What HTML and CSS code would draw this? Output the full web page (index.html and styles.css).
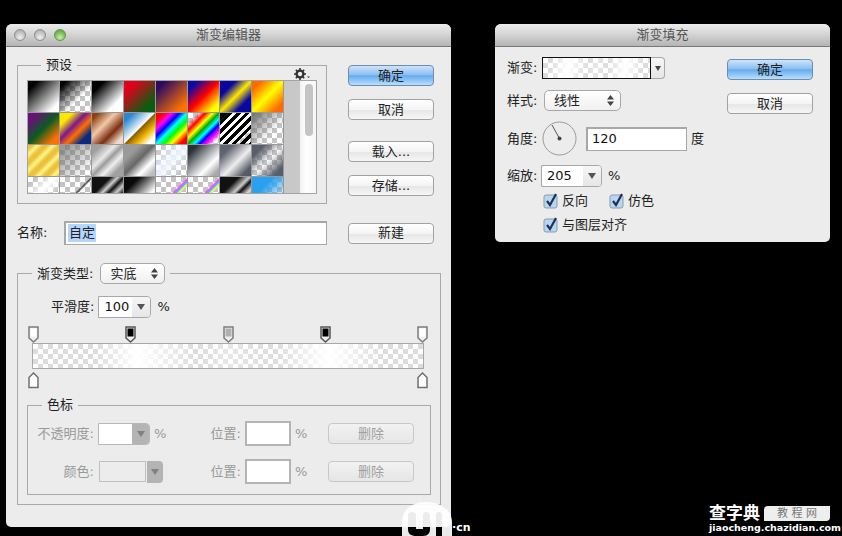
FILE: index.html
```html
<!DOCTYPE html>
<html lang="zh-CN">
<head>
    <meta charset="UTF-8">
    <meta name="viewport" content="width=device-width, initial-scale=1.0">
    <title>渐变编辑器</title>
    <link rel="stylesheet" href="styles.css">
</head>
<body>
    <!-- 渐变编辑器 -->
    <div class="window editor">
        <div class="titlebar">
            <div class="lights">
                <span class="light"></span>
                <span class="light"></span>
                <span class="light green"></span>
            </div>
            <span>渐变编辑器</span>
        </div>
        <div class="editor-body">
            <div class="editor-top">
                <fieldset class="group presets">
                    <legend>预设</legend>
                    <svg class="gear" width="16" height="12" viewBox="0 0 16 12">
                        <circle cx="6" cy="6" r="3.400" fill="none" stroke="#333" stroke-width="2.400"/>
                        <path d="M6 0v2.400M6 9.600V12M0 6h2.400M9.600 6H12M1.800 1.800l1.700 1.700M8.500 8.500l1.700 1.700M10.200 1.800L8.500 3.500M3.500 8.500l-1.700 1.700" stroke="#333" stroke-width="1.600"/>
                        <path d="M13 8.500h3l-1.500 1.500z" fill="#333"/>
                    </svg>
                    <div class="preset-box">
                        <div class="swatches">
                            <i class="sw a1"></i><i class="sw a2"></i><i class="sw a3"></i><i class="sw a4"></i><i class="sw a5"></i><i class="sw a6"></i><i class="sw a7"></i><i class="sw a8"></i>
                            <i class="sw b1"></i><i class="sw b2"></i><i class="sw b3"></i><i class="sw b4"></i><i class="sw b5"></i><i class="sw b6"></i><i class="sw b7"></i><i class="sw b8"></i>
                            <i class="sw c1"></i><i class="sw c2"></i><i class="sw c3"></i><i class="sw c4"></i><i class="sw c5"></i><i class="sw c6"></i><i class="sw c7"></i><i class="sw c8"></i>
                            <i class="sw d1"></i><i class="sw d2"></i><i class="sw d3"></i><i class="sw d4"></i><i class="sw d5"></i><i class="sw d5"></i><i class="sw d7"></i><i class="sw d8"></i>
                        </div>
                        <div class="preset-gutter"></div>
                        <div class="scrollbar"><div class="thumb"></div></div>
                    </div>
                </fieldset>
                <div class="side-buttons">
                    <div class="btn primary">确定</div>
                    <div class="btn">取消</div>
                    <div class="btn spaced">载入...</div>
                    <div class="btn">存储...</div>
                </div>
            </div>

            <div class="name-row">
                <span class="name-label">名称:</span>
                <div class="name-input"><span class="selected-text">自定</span></div>
                <div class="btn name-btn">新建</div>
            </div>

            <fieldset class="group gradient-group">
                <legend class="type-legend">
                    <span>渐变类型:</span>
                    <div class="select type-select">实底<svg class="updown" width="7" height="11" viewBox="0 0 7 11"><path d="M3.500 0L7 4.500H0zM3.500 11L0 6.500h7z" fill="#444"/></svg></div>
                </legend>
                <div class="smooth-row">
                    <span>平滑度:</span>
                    <div class="combo smooth-combo">
                        <div class="combo-value">100</div>
                        <div class="combo-arrow"><span class="tri"></span></div>
                    </div>
                    <span class="unit">%</span>
                </div>

                <div class="stops">
                    <svg class="stop" width="11" height="17"><path d="M1 1h9v11l-4.500 4-4.500-4z" fill="#eee" stroke="#7c7c7c" stroke-width="1.500"/><rect x="2.500" y="2.500" width="6" height="8" fill="#fff"/></svg>
                    <svg class="stop" width="11" height="17"><path d="M1 1h9v11l-4.500 4-4.500-4z" fill="#eee" stroke="#555" stroke-width="1.500"/><rect x="2.500" y="2.500" width="6" height="8" fill="#000"/></svg>
                    <svg class="stop" width="11" height="17"><path d="M1 1h9v11l-4.500 4-4.500-4z" fill="#eee" stroke="#7c7c7c" stroke-width="1.500"/><rect x="2.500" y="2.500" width="6" height="8" fill="#b0b0b0"/></svg>
                    <svg class="stop" width="11" height="17"><path d="M1 1h9v11l-4.500 4-4.500-4z" fill="#eee" stroke="#555" stroke-width="1.500"/><rect x="2.500" y="2.500" width="6" height="8" fill="#000"/></svg>
                    <svg class="stop" width="11" height="17"><path d="M1 1h9v11l-4.500 4-4.500-4z" fill="#eee" stroke="#7c7c7c" stroke-width="1.500"/><rect x="2.500" y="2.500" width="6" height="8" fill="#fff"/></svg>
                </div>
                <div class="gradient-bar"></div>
                <div class="stops bottom-stops">
                    <svg class="stop" width="11" height="17"><path d="M5.500 1l4.500 4.500V15.500H1V5.500z" fill="#fff" stroke="#707070" stroke-width="1.500"/></svg>
                    <svg class="stop" width="11" height="17"><path d="M5.500 1l4.500 4.500V15.500H1V5.500z" fill="#fff" stroke="#707070" stroke-width="1.500"/></svg>
                </div>

                <fieldset class="group color-group">
                    <legend>色标</legend>
                    <div class="color-rows">
                        <span class="dim-label">不透明度:</span>
                        <div class="cell-control">
                            <div class="combo opacity-combo">
                                <div class="combo-value"></div>
                                <div class="combo-arrow off"><span class="tri"></span></div>
                            </div>
                            <span class="unit dim">%</span>
                        </div>
                        <span class="dim-label">位置:</span>
                        <div class="pos-input"></div>
                        <span class="unit dim">%</span>
                        <div class="btn off">删除</div>

                        <span class="dim-label">颜色:</span>
                        <div class="cell-control">
                            <div class="color-swatch"></div>
                            <div class="color-arrow"><span class="tri"></span></div>
                        </div>
                        <span class="dim-label">位置:</span>
                        <div class="pos-input"></div>
                        <span class="unit dim">%</span>
                        <div class="btn off">删除</div>
                    </div>
                </fieldset>
            </fieldset>
        </div>
    </div>

    <!-- 渐变填充 -->
    <div class="window fill">
        <div class="titlebar"><span>渐变填充</span></div>
        <div class="fill-body">
            <div class="fill-form">
                <div class="fill-row">
                    <span class="fill-label">渐变:</span>
                    <div class="fill-preview"></div>
                    <div class="fill-arrow"><span class="tri"></span></div>
                </div>
                <div class="fill-row style-row">
                    <span class="fill-label">样式:</span>
                    <div class="select style-select">线性<svg class="updown" width="7" height="11" viewBox="0 0 7 11"><path d="M3.500 0L7 4.500H0zM3.500 11L0 6.500h7z" fill="#444"/></svg></div>
                </div>
                <div class="fill-row angle-row">
                    <span class="fill-label">角度:</span>
                    <svg class="dial" width="35" height="35" viewBox="0 0 35 35">
                        <circle cx="17.500" cy="17.500" r="16.500" fill="#ececec" stroke="#9a9a9a"/>
                        <path d="M10 4l7.500 13.500" stroke="#555" stroke-width="1"/>
                        <circle cx="17.500" cy="17.500" r="2" fill="#444"/>
                    </svg>
                    <div class="angle-input">120</div>
                    <span class="angle-unit">度</span>
                </div>
                <div class="fill-row scale-row">
                    <span class="fill-label">缩放:</span>
                    <div class="combo scale-combo">
                        <div class="combo-value">205</div>
                        <div class="combo-arrow"><span class="tri"></span></div>
                    </div>
                    <span class="unit">%</span>
                </div>
                <div class="check-row">
                    <div class="check-item">
                        <svg width="16" height="16" viewBox="0 0 16 16"><rect x="1" y="2" width="13" height="13" rx="2" fill="#b6d6f2" stroke="#8a9db0"/><path d="M4 8l3 4 6-11" fill="none" stroke="#1d3350" stroke-width="2.200"/></svg>
                        <span>反向</span>
                    </div>
                    <div class="check-item">
                        <svg width="16" height="16" viewBox="0 0 16 16"><rect x="1" y="2" width="13" height="13" rx="2" fill="#b6d6f2" stroke="#8a9db0"/><path d="M4 8l3 4 6-11" fill="none" stroke="#1d3350" stroke-width="2.200"/></svg>
                        <span>仿色</span>
                    </div>
                </div>
                <div class="check-row second">
                    <div class="check-item">
                        <svg width="16" height="16" viewBox="0 0 16 16"><rect x="1" y="2" width="13" height="13" rx="2" fill="#b6d6f2" stroke="#8a9db0"/><path d="M4 8l3 4 6-11" fill="none" stroke="#1d3350" stroke-width="2.200"/></svg>
                        <span>与图层对齐</span>
                    </div>
                </div>
            </div>
            <div class="fill-buttons">
                <div class="btn primary">确定</div>
                <div class="btn">取消</div>
            </div>
        </div>
    </div>

    <!-- 水印 -->
    <svg class="blob" width="50" height="34" viewBox="0 0 50 34">
        <path fill="#fff" fill-opacity=".92" fill-rule="evenodd" d="M0 34V20C0 8 10 0 24 0s26 8 26 20v14zM6 13v14c0 5 3 7 8 7h7c5 0 7-3 7-7V13c0-2-2-3-4-3s-3 1-3 3v14h-7V13c0-2-2-3-4-3s-4 1-4 3zM34 13v21h6V13c0-2-1-3-3-3s-3 1-3 3z"/>
    </svg>
    <span class="blob-cn">·cn</span>
    <div class="mark">
        <div class="mark-top">
            <span class="mark-name">查字典</span>
            <span class="mark-box">教 程 网</span>
        </div>
        <div class="mark-url">jiaocheng.chazidian.com</div>
    </div>
</body>
</html>
```

FILE: styles.css
```css
:root {
    --check: conic-gradient(#c4c4c4 25%, #fff 0 50%, #c4c4c4 0 75%, #fff 0) 0 0 / 10px 10px;
    --check-light: conic-gradient(#dcdcdc 25%, #fff 0 50%, #dcdcdc 0 75%, #fff 0) 0 0 / 10px 10px;
}

* {
    box-sizing: border-box;
}

body {
    margin: 0;
    width: 842px;
    height: 536px;
    overflow: hidden;
    position: relative;
    background-color: #000;
    color: #222;
    font-family: "DejaVu Sans", "Noto Sans CJK SC", sans-serif;
    font-size: 13px;
    line-height: 16px;
}

/* Finestre */
.window {
    position: absolute;
    top: 24px;
    background-color: #ececec;
    border-radius: 6px 6px 5px 5px;
    overflow: hidden;
}

.editor {
    left: 6px;
    width: 445px;
    height: 503px;
}

.fill {
    left: 495px;
    width: 335px;
    height: 218px;
}

.titlebar {
    height: 23px;
    position: relative;
    display: flex;
    align-items: center;
    justify-content: center;
    color: #555;
    background: linear-gradient(#ececec, #d8d8d8 40%, #b4b4b4);
    border-bottom: 1px solid #777;
}

.lights {
    position: absolute;
    left: 8px;
    top: 5px;
    display: flex;
    gap: 8px;
}

.light {
    width: 12px;
    height: 12px;
    border-radius: 50%;
    border: 1px solid #8d8d8d;
    background: radial-gradient(circle at 50% 75%, #f0f0f0, #b8b8b8 70%);
}

.light.green {
    border-color: #5d9a45;
    background: radial-gradient(circle at 50% 75%, #c8f0a8, #6cb04c 70%);
}

/* Gruppi */
.group {
    margin: 0;
    padding: 0;
    border: 1px solid #a9a9a9;
    position: relative;
    min-width: 0;
}

.group legend {
    padding: 0 5px;
    margin-left: 14px;
    height: 16px;
}

/* Editor */
.editor-body {
    padding: 10px 0 0 11px;
}

.editor-top {
    display: flex;
}

.presets {
    width: 310px;
    padding: 7px 0 9px 9px;
}

.gear {
    position: absolute;
    right: 16px;
    top: -5px;
    background-color: #ececec;
}

.preset-box {
    width: 290px;
    height: 114px;
    display: flex;
    border: 1px solid #a4a4a4;
    background-color: #fff;
    overflow: hidden;
}

.swatches {
    width: 256px;
    flex: none;
    display: grid;
    grid-template-columns: repeat(8, 31px);
    grid-auto-rows: 31px;
    gap: 1px;
    background-color: #999;
}

.preset-gutter {
    width: 16px;
    flex: none;
    background-color: #c8c8c8;
}

.scrollbar {
    flex: 1;
    padding: 3px 3px 0 5px;
    background: linear-gradient(90deg, #f2f2f2, #fff 40%, #f6f6f6);
}

.thumb {
    height: 52px;
    border-radius: 4px;
    background-color: #c4c4c4;
}

.sw {
    display: block;
}

.a1 { background: linear-gradient(135deg, #000 15%, #fff 85%); }
.a2 { background: linear-gradient(135deg, #000 10%, transparent 60%), var(--check); }
.a3 { background: linear-gradient(135deg, #000 20%, #fff 75%); }
.a4 { background: linear-gradient(135deg, #e2001c 20%, #0b5d10 80%); }
.a5 { background: linear-gradient(135deg, #2b0b62 15%, #ff7200 85%); }
.a6 { background: linear-gradient(135deg, #0a0aa8 15%, #f00 50%, #ff0 85%); }
.a7 { background: linear-gradient(135deg, #0808a0 25%, #ffe800 50%, #0808a0 75%); }
.a8 { background: linear-gradient(135deg, #ff6a00 15%, #ff0 50%, #ff6a00 85%); }

.b1 { background: linear-gradient(135deg, #6a1078 15%, #0b5c20 50%, #ff7000 85%); }
.b2 { background: linear-gradient(135deg, #ffe800 20%, #7a1a90 42%, #ff7000 60%, #0a2a80 80%); }
.b3 { background: linear-gradient(135deg, #8a4212 10%, #f2c8a8 38%, #7a3010 65%, #f0dccc 88%); }
.b4 { background: linear-gradient(135deg, #2a88d0 15%, #fff 49%, #8a5a00 51%, #f0b800 70%, #fff 88%); }
.b5 { background: linear-gradient(135deg, #f00 12%, #f0f 26%, #00f 38%, #0ff 50%, #0f0 62%, #ff0 74%, #f00 88%); }
.b6 { background: linear-gradient(135deg, transparent 15%, #f00 28%, #ff0 40%, #0a0 50%, #0ff 60%, #00f 68%, #f0f 78%, transparent 90%), var(--check); }
.b7 { background: linear-gradient(135deg, #000 12%, transparent 22%), repeating-linear-gradient(135deg, #000 0 3px, transparent 3px 6px), linear-gradient(135deg, #fff 62%, transparent 74%), var(--check); }
.b8 { background: linear-gradient(135deg, #777 5%, transparent 65%), var(--check); }

.c1 { background: repeating-linear-gradient(135deg, #edc23a 0 3px, #fff68c 7px, #edc23a 11px); }
.c2 { background: linear-gradient(135deg, rgba(110, 110, 110, .7) 10%, transparent 90%), var(--check); }
.c3 { background: linear-gradient(135deg, #a0a0a0 15%, #e8e8e8 38%, #9c9c9c 50%, #eee 65%, #a0a0a0 82%); }
.c4 { background: linear-gradient(135deg, #9a9a9a 25%, #666 48%, #fff 72%, #bdbdbd 90%); }
.c5 { background: linear-gradient(135deg, transparent 10%, rgba(240, 245, 255, .9) 50%, transparent 85%), var(--check); }
.c6 { background: linear-gradient(135deg, #2a3038 15%, #fff 68%, #a8a8a8 90%); }
.c7 { background: linear-gradient(135deg, #606470 20%, #eee 55%, #555a64 85%); }
.c8 { background: linear-gradient(135deg, #5a5e68 20%, transparent 50%, #5a5e68 85%), var(--check); }

.d1 { background: linear-gradient(135deg, transparent 15%, #fff 45%, transparent 70%), var(--check); }
.d2 { background: linear-gradient(135deg, transparent 49%, #444 52%, transparent 56%, transparent 74%, #444 77%, transparent 80%), var(--check); }
.d3 { background: linear-gradient(135deg, #111 30%, #ccc 42%, #111 52%, #ccc 64%, #111 76%, #ddd 88%); }
.d4 { background: linear-gradient(135deg, #0a0a0a 25%, #fff 70%, #aaa 90%); }
.d5 { background: linear-gradient(135deg, transparent 50%, #f4f 54%, #4bf 58%, #ff4 62%, transparent 66%, transparent 76%, #f4f 80%, #4bf 84%, #ff4 88%, transparent 92%), var(--check); }
.d7 { background: linear-gradient(135deg, #111 30%, #ccc 48%, #111 56%, #ddd 70%, #222 84%); }
.d8 { background: linear-gradient(135deg, #29a0f0 35%, transparent 85%), var(--check); }

/* Bottoni */
.side-buttons {
    width: 86px;
    margin-left: 21px;
    margin-top: 8px;
    display: flex;
    flex-direction: column;
    gap: 13px;
}

.btn {
    height: 21px;
    display: flex;
    align-items: center;
    justify-content: center;
    border: 1px solid #a2a2a2;
    border-radius: 4px;
    background: linear-gradient(#fff, #f4f4f4 50%, #e6e6e6 52%, #f6f6f6);
    color: #222;
}

.btn.primary {
    border-color: #6f8cac;
    background: linear-gradient(#cfe4f9, #8cc0f2 45%, #66abf0 52%, #b8e0fd);
}

.btn.spaced {
    margin-top: 8px;
}

.btn.off {
    color: #a0a0a0;
    border-color: #c8c8c8;
    background: linear-gradient(#f2f2f2, #e6e6e6);
}

/* Nome */
.name-row {
    margin-top: 17px;
    display: flex;
    align-items: center;
}

.name-label {
    width: 47px;
}

.name-input {
    width: 263px;
    height: 24px;
    padding: 1px 2px;
    border: 2px solid #a8a8a8;
    border-right-width: 1px;
    border-bottom-width: 1px;
    background-color: #fff;
    line-height: 18px;
}

.selected-text {
    display: inline-block;
    background-color: #b4d5fe;
    padding: 0 1px;
}

.name-btn {
    width: 86px;
    margin-left: 21px;
}

/* Tipo di gradiente */
.gradient-group {
    width: 424px;
    margin-top: 18px;
}

.group .type-legend {
    height: 21px;
    display: flex;
    align-items: center;
    gap: 7px;
}

.select {
    height: 21px;
    display: flex;
    align-items: center;
    position: relative;
    border: 1px solid #a8a8a8;
    border-radius: 5px;
    background: linear-gradient(#fff, #f0f0f0);
}

.type-select {
    width: 65px;
    padding-left: 9px;
}

.style-select {
    width: 77px;
    padding-left: 9px;
    margin-left: 2px;
}

.updown {
    position: absolute;
    right: 6px;
    top: 4px;
}

.smooth-row {
    margin-top: 12px;
    padding-left: 33px;
    display: flex;
    align-items: center;
}

.combo {
    height: 22px;
    display: flex;
    border: 1px solid #a8a8a8;
    border-radius: 0 4px 4px 0;
    overflow: hidden;
}

.smooth-combo {
    width: 53px;
    margin-left: 4px;
}

.combo-value {
    width: 33px;
    padding-left: 5px;
    line-height: 20px;
    background-color: #fff;
    color: #111;
    flex: none;
}

.combo-arrow {
    flex: 1;
    display: flex;
    align-items: center;
    justify-content: center;
    background: linear-gradient(#f6f6f6, #e6e6e6);
}

.combo-arrow.off {
    background: #b4b4b4;
}

.tri {
    width: 0;
    height: 0;
    border-left: 4px solid transparent;
    border-right: 4px solid transparent;
    border-top: 6px solid #555;
}

.off .tri {
    border-top-color: #808080;
}

.unit {
    margin-left: 6px;
    line-height: 16px;
}

.unit.dim {
    color: #999;
    margin-left: 4px;
}

.stops {
    width: 400px;
    margin: 8px 0 0 10px;
    display: flex;
    justify-content: space-between;
}

.bottom-stops {
    margin-top: 3px;
}

.stop {
    display: block;
}

.gradient-bar {
    width: 392px;
    height: 26px;
    margin: 0 0 0 14px;
    border: 1px solid #a8a8a8;
    background:
        linear-gradient(90deg, transparent 16%, #fff 27%, transparent 42%, rgba(255, 255, 255, .3) 50%, transparent 62%, #fff 76%, transparent 90%),
        var(--check-light);
}

/* Color stop */
.color-group {
    width: 404px;
    margin: 8px 0 9px 9px;
}

.color-rows {
    padding: 8px 0 10px 0;
    display: grid;
    grid-template-columns: 70px 109px 38px 46px 37px 86px;
    grid-template-rows: 25px 25px;
    row-gap: 13px;
    align-items: center;
}

.dim-label {
    color: #999;
    text-align: right;
    padding-right: 4px;
}

.cell-control {
    display: flex;
    align-items: center;
}

.opacity-combo {
    width: 52px;
    border-color: #b8b8b8;
}

.opacity-combo .combo-value {
    padding: 0;
}

.pos-input {
    height: 25px;
    border: 2px solid #b4b4b4;
    background-color: #fff;
}

.color-swatch {
    width: 47px;
    height: 21px;
    margin-left: 1px;
    border: 1px solid #c0c0c0;
    background-color: #ececec;
}

.color-arrow {
    width: 16px;
    height: 22px;
    margin-left: 1px;
    display: flex;
    align-items: center;
    justify-content: center;
    background-color: #b4b4b4;
    border-radius: 0 4px 4px 0;
}

.color-arrow .tri {
    border-top-color: #808080;
}

/* Riempimento */
.fill-body {
    display: flex;
    padding: 10px 17px 0 12px;
}

.fill-form {
    width: 215px;
}

.fill-row {
    display: flex;
    align-items: center;
}

.fill-label {
    width: 35px;
    flex: none;
}

.fill-preview {
    width: 109px;
    height: 22px;
    border: 1px solid #111;
    background:
        linear-gradient(100deg, transparent 8%, #fff 24%, transparent 42%, rgba(255, 255, 255, .3) 50%, transparent 60%, #fff 76%, transparent 92%),
        var(--check-light);
}

.fill-arrow {
    width: 14px;
    height: 22px;
    display: flex;
    align-items: center;
    justify-content: center;
    border: 1px solid #a8a8a8;
    border-left: none;
    border-radius: 0 4px 4px 0;
    background: linear-gradient(#f6f6f6, #e6e6e6);
}

.fill-arrow .tri {
    border-left-width: 3px;
    border-right-width: 3px;
    border-top-width: 5px;
    border-top-color: #444;
}

.style-row {
    margin-top: 11px;
}

.angle-row {
    margin-top: 10px;
}

.dial {
    flex: none;
}

.angle-input {
    width: 101px;
    height: 24px;
    margin-left: 9px;
    padding-left: 4px;
    border: 2px solid #a8a8a8;
    border-right-width: 1px;
    border-bottom-width: 1px;
    background-color: #fff;
    line-height: 20px;
    color: #111;
}

.angle-unit {
    margin-left: 4px;
    flex: none;
}

.scale-row {
    margin-top: 9px;
}

.scale-combo {
    width: 61px;
    margin-left: -1px;
}

.scale-combo .combo-value {
    width: 41px;
}

.check-row {
    margin: 6px 0 0 36px;
    display: flex;
    gap: 21px;
}

.check-row.second {
    margin-top: 8px;
}

.check-item {
    display: flex;
    align-items: center;
    gap: 3px;
}

.check-item svg {
    display: block;
}

.fill-buttons {
    width: 86px;
    margin-left: auto;
    margin-top: 2px;
    display: flex;
    flex-direction: column;
    gap: 13px;
}

/* Watermark */
.blob {
    position: absolute;
    left: 402px;
    top: 502px;
    display: block;
}

.blob-cn {
    position: absolute;
    left: 452px;
    top: 520px;
    color: #fff;
    font-weight: bold;
    font-size: 11px;
}

.mark {
    position: absolute;
    left: 709px;
    top: 504px;
    width: 121px;
    color: #fff;
}

.mark-top {
    display: flex;
    align-items: center;
    gap: 4px;
}

.mark-name {
    font-size: 17px;
    font-weight: bold;
    line-height: 18px;
    flex: none;
}

.mark-box {
    flex: 1;
    height: 15px;
    border-radius: 4px 0 4px 0;
    background-color: #eee;
    color: #777;
    font-size: 11px;
    line-height: 15px;
    text-align: center;
}

.mark-url {
    font-size: 9.500px;
    font-weight: bold;
    line-height: 11px;
    white-space: nowrap;
}
```
